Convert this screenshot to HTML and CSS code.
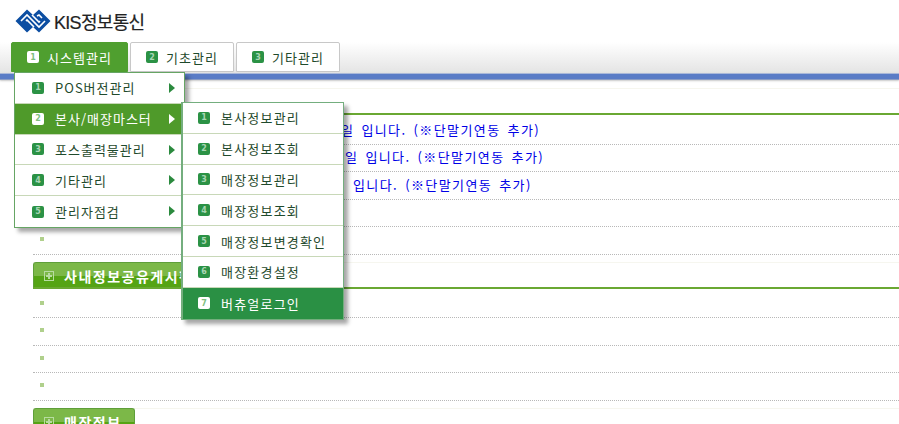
FILE: index.html
```html
<!DOCTYPE html>
<html lang="ko">
<head>
  <meta charset="UTF-8">
  <title>KIS정보통신</title>
  <link rel="stylesheet" href="styles.css">
</head>
<body>
  <header class="top">
    <div class="logo">
      <svg class="logo-mark" width="36" height="24" viewBox="0 0 36 24">
        <path fill="#0c4ea2" d="M0.5 12 L12 0.5 L18 6 L24 0.5 L35.5 12 L24 23.5 L18 18 L12 23.5 Z"/>
        <path fill="none" stroke="#fff" stroke-width="1.6" d="M6 12 L12 6 L24 18 L30 12 M11 12 L12 11 L19 18 M17 6 L24 13 L25 12 M22 7 L24 6 L27 9"/>
      </svg>
      <span class="logo-text">KIS정보통신</span>
    </div>
  </header>

  <nav class="tabs">
    <a class="tab tab-on"><i class="num">1</i>시스템관리</a>
    <a class="tab"><i class="num">2</i>기초관리</a>
    <a class="tab"><i class="num">3</i>기타관리</a>
  </nav>
  <div class="blue-bar"></div>

  <main class="content">
    <section class="board">
      <h2 class="board-title"><i class="plus"></i></h2>
      <ul class="rows">
        <li><span class="row-a">일 입니다. (※단말기연동 추가)</span></li>
        <li><span class="row-b">일 입니다. (※단말기연동 추가)</span></li>
        <li><span class="row-c">입니다. (※단말기연동 추가)</span></li>
        <li></li>
        <li></li>
      </ul>
    </section>
    <section class="board">
      <h2 class="board-title"><i class="plus"></i>사내정보공유게시판</h2>
      <ul class="rows">
        <li></li>
        <li></li>
        <li></li>
        <li></li>
      </ul>
    </section>
    <section class="board">
      <h2 class="board-title"><i class="plus"></i>매장정보</h2>
    </section>
  </main>

  <ul class="menu menu-1">
    <li><i class="num">1</i>POS버전관리<b class="arrow"></b></li>
    <li class="on"><i class="num">2</i>본사/매장마스터<b class="arrow"></b></li>
    <li><i class="num">3</i>포스출력물관리<b class="arrow"></b></li>
    <li><i class="num">4</i>기타관리<b class="arrow"></b></li>
    <li><i class="num">5</i>관리자점검<b class="arrow"></b></li>
  </ul>
  <ul class="menu menu-2">
    <li><i class="num">1</i>본사정보관리</li>
    <li><i class="num">2</i>본사정보조회</li>
    <li><i class="num">3</i>매장정보관리</li>
    <li><i class="num">4</i>매장정보조회</li>
    <li><i class="num">5</i>매장정보변경확인</li>
    <li><i class="num">6</i>매장환경설정</li>
    <li class="on"><i class="num">7</i>버츄얼로그인</li>
  </ul>
</body>
</html>
```

FILE: styles.css
```css
*,*::before,*::after{
  margin: 0;
  padding: 0;
  box-sizing: border-box;
}
html,body{
  height: 424px;
  overflow: hidden;
}
body{
  position: relative;
  background: #fff;
  font-family: "Noto Sans CJK KR", "Noto Sans", sans-serif;
  font-size: 13px;
}
ul{
  list-style: none;
}
i,b{
  font-style: normal;
}

/* header */
.top{
  height: 42px;
  padding: 9px 0 0 15px;
}
.logo{
  display: flex;
  align-items: center;
  gap: 3px;
  height: 24px;
}
.logo-text{
  font-family: "Liberation Sans", "Noto Sans CJK KR", sans-serif;
  font-size: 18px;
  letter-spacing: -.7px;
  color: #222;
  -webkit-text-stroke: .2px #222;
}

/* tabs */
.tabs{
  display: flex;
  height: 31px;
  padding-left: 11px;
  gap: 2px;
  background: linear-gradient(#fff, #e4e4e4);
}
.tab{
  display: flex;
  align-items: center;
  justify-content: center;
  width: 104px;
  height: 30px;
  gap: 8px;
  border: 1px solid #c8c8c8;
  border-radius: 2px 2px 0 0;
  background: #fff;
  color: #1f4a2c;
  letter-spacing: 1px;
}
.tab-on{
  width: 117px;
  border-color: #4f9f2f;
  background: #4f9f2f;
  color: #fff;
}
.num{
  display: inline-flex;
  align-items: center;
  justify-content: center;
  flex: none;
  width: 12px;
  height: 12px;
  border-radius: 2px;
  background: #2b9245;
  color: #a9d6b4;
  font: bold 8px "DejaVu Sans", sans-serif;
  letter-spacing: 0;
}
.tab-on .num,.menu .on .num{
  background: #fff;
  color: #7fbf7f;
}
.blue-bar{
  height: 7px;
  background: #5a7cc6;
  border-top: 1px solid #aab8d8;
  border-bottom: 1px solid #8a9cc4;
  box-shadow: 0 1px 2px #c9c9c9;
}

/* boards */
.content{
  padding: 8px 0 0 33px;
}
.board{
  box-shadow: inset 0 1px #f6f6ef;
}
.board-title{
  position: relative;
  display: flex;
  align-items: center;
  width: fit-content;
  min-width: 102px;
  height: 27px;
  padding: 0 10px;
  border: 1px solid #5f9f3a;
  border-bottom: 0;
  border-radius: 3px 3px 0 0;
  background: linear-gradient(#7cb848 50%, #55a414 50%);
  color: #fff;
  font-size: 14px;
  font-weight: bold;
  letter-spacing: 1.5px;
  white-space: nowrap;
}
.board-title::after{
  content: "";
  position: absolute;
  left: -1px;
  bottom: 0;
  width: 866px;
  height: 2px;
  background: #6aa832;
}
.plus{
  position: relative;
  flex: none;
  width: 10px;
  height: 10px;
  margin-right: 10px;
  border: 1px solid #b7dca0;
}
.plus::before,.plus::after{
  content: "";
  position: absolute;
  background: #b7dca0;
}
.plus::before{
  left: 1px;
  top: 3px;
  width: 6px;
  height: 2px;
}
.plus::after{
  left: 3px;
  top: 1px;
  width: 2px;
  height: 6px;
}
.rows{
  padding-top: 2px;
  margin-bottom: 7px;
}
.rows li{
  display: flex;
  align-items: center;
  height: 27.5px;
  padding: 0 0 2px 7px;
  border-bottom: 1px dotted #b8b8b8;
  color: #0000e6;
  font-size: 13px;
  letter-spacing: 1.4px;
  word-spacing: 2px;
  white-space: nowrap;
}
.rows li::before{
  content: "";
  flex: none;
  width: 4px;
  height: 4px;
  margin-right: 10px;
  background: #b0d08c;
}
/* text starts under the open menu */
.row-a{ margin-left: 287px; }
.row-b{ margin-left: 291px; }
.row-c{ margin-left: 299px; }

/* drop menus */
.menu{
  position: absolute;
  background: #fff;
  border: 1px solid #66a564;
  box-shadow: 4px 4px 4px rgba(0,0,0,.35);
  color: #1f4a2c;
}
.menu li{
  position: relative;
  display: flex;
  align-items: center;
  height: 30.8px;
  gap: 11px;
  padding-left: 17px;
  border-bottom: 1px solid #c8d8b8;
  letter-spacing: 1px;
}
.menu li:last-child{
  border-bottom: 0;
}
.menu-1{
  left: 14px;
  top: 72px;
  width: 171px;
}
.menu-1 .on{
  background: #4f9a2a;
  color: #fff;
}
.menu-2{
  left: 181px;
  top: 102px;
  width: 163px;
  border-left-width: 2px;
  border-color: #74ae7e;
}
.menu-2 li{
  padding-left: 15px;
  letter-spacing: 1.2px;
}
.menu-2 .on{
  background: #2a9044;
  color: #fff;
}
.arrow{
  position: absolute;
  right: 9px;
  top: 10px;
  border-left: 6px solid #2b8a3e;
  border-top: 5px solid transparent;
  border-bottom: 5px solid transparent;
}
.on .arrow{
  border-left-color: #fff;
}
```
